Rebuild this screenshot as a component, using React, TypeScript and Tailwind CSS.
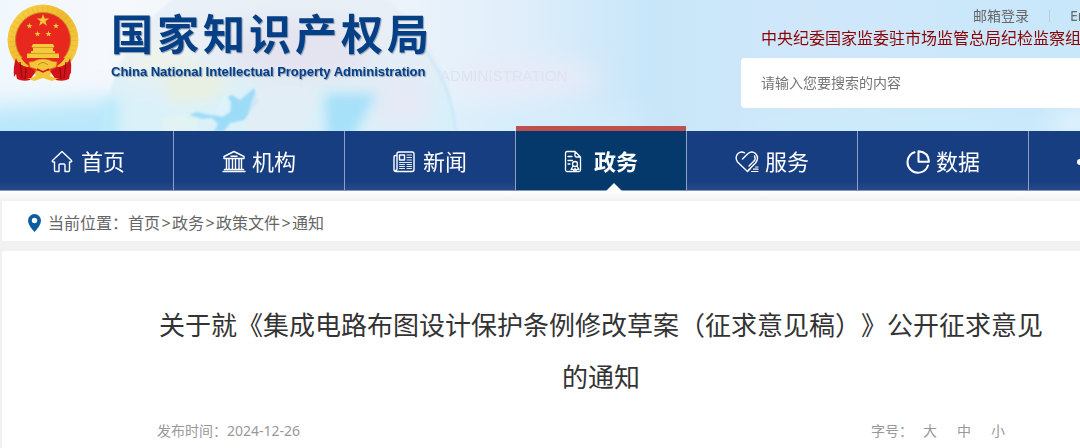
import React from "react";

const STAR = "M0 -1L0.24 -0.32L0.95 -0.31L0.38 0.12L0.59 0.81L0 0.4L-0.59 0.81L-0.38 0.12L-0.95 -0.31L-0.24 -0.32Z";

const Emblem = () => (
  <svg className="w-[72px] h-[78px] shrink-0" viewBox="0 0 72 78" aria-hidden="true">
    <defs>
      <linearGradient id="gold" x1="0" y1="0" x2="1" y2="1">
        <stop offset="0" stopColor="#f9d44c" />
        <stop offset="0.5" stopColor="#eeb92e" />
        <stop offset="1" stopColor="#f8d248" />
      </linearGradient>
    </defs>
    <circle cx="36" cy="36" r="35.5" fill="url(#gold)" />
    <circle cx="36" cy="36" r="31" fill="none" stroke="#c98f1c" strokeWidth="6" strokeDasharray="1 4" opacity="0.2" />
    <circle cx="36" cy="36" r="27.5" fill="#e8281f" stroke="#c8861b" strokeWidth="1" />
    <g fill="#f0c93a">
      <path d={STAR} transform="translate(36 16.500) scale(6.500)" />
      <path d={STAR} transform="translate(22.500 22) scale(3.200)" />
      <path d={STAR} transform="translate(49 22) scale(3.200)" />
      <path d={STAR} transform="translate(30.500 30) scale(3.200)" />
      <path d={STAR} transform="translate(41.500 30) scale(3.200)" />
    </g>
    <path d="M26 40h20l1.500 3h-1.500v4h2v2.500h4v5H20v-5h4V47h2v-4h-1.500z" fill="#f5c93c" />
    <path d="M25 43.500h22M23 49.500h26" stroke="#d68a20" strokeWidth="0.800" />
    <path d="M10 54h52l-5 9q-21 8-42 0z" fill="#e8281f" />
    <path d="M6 52h7q3 6 9 10l-4 3q-9-4-12-13zM66 52h-7q-3 6-9 10l4 3q9-4 12-13z" fill="#f0c035" />
    <path d="M9 54q1 7 14 10l6 3-6 9q-7 2-13-1l-1-5-2 3q-1-11 2-19z" fill="#d2141a" />
    <path d="M63 54q-1 7-14 10l-6 3 6 9q7 2 13-1l1-5 1-1q1-8-1-15z" fill="#d2141a" />
    <path d="M13 58l2 16M19 64l-1 11M59 58l-2 16M53 64l1 11" stroke="#8f0b12" strokeWidth="1.200" />
    <path d="M22 58q5 0 8-2 6-2 12 0 3 2 8 2l-1 5-6 2-7 4-7-4-6-2z" fill="#f3c63a" stroke="#c98b1d" strokeWidth="0.600" />
    <path d="M31 61q5-5 10 0" fill="none" stroke="#c98b1d" strokeWidth="1" />
    <path d="M20 74q8 1 11-6 5-3 10 0 3 7 11 6l-7 3-9-3-9 3z" fill="#f3c63a" />
    <path d="M30 65l6 3 6-3" fill="none" stroke="#d2141a" strokeWidth="1.500" />
  </svg>
);

const Backdrop = () => (
  <svg className="absolute inset-0 w-full h-full" viewBox="0 0 1080 131" preserveAspectRatio="none" aria-hidden="true">
    <defs>
      <linearGradient id="sky" x1="0" x2="1" y1="0" y2="0">
        <stop offset="0" stopColor="#f1f8fd" />
        <stop offset="0.1" stopColor="#f5f8fc" />
        <stop offset="0.35" stopColor="#eef4fb" />
        <stop offset="0.48" stopColor="#e0eefa" />
        <stop offset="0.6" stopColor="#c8e6f9" />
        <stop offset="0.75" stopColor="#d0e7fa" />
        <stop offset="1" stopColor="#c8e7fb" />
      </linearGradient>
      <filter id="soft" x="-50%" y="-100%" width="200%" height="300%">
        <feGaussianBlur stdDeviation="12" />
      </filter>
      <filter id="mid" x="-50%" y="-50%" width="200%" height="200%">
        <feGaussianBlur stdDeviation="6" />
      </filter>
      <filter id="edge" x="-20%" y="-20%" width="140%" height="140%">
        <feGaussianBlur stdDeviation="1.200" />
      </filter>
      <linearGradient id="globe" x1="0" x2="0" y1="0" y2="0.4">
        <stop offset="0" stopColor="#e9f0f8" />
        <stop offset="0.6" stopColor="#e6eef5" />
        <stop offset="1" stopColor="#d6f0f9" />
      </linearGradient>
    </defs>
    <rect width="1080" height="131" fill="url(#sky)" />
    <g filter="url(#soft)">
      <path d="M-30 108l150-10v60H-30z" fill="#b9e7fb" />
      <ellipse cx="530" cy="78" rx="70" ry="16" fill="#e9ebf8" />
      <ellipse cx="540" cy="122" rx="110" ry="12" fill="#d3edfb" />
      <ellipse cx="900" cy="128" rx="160" ry="10" fill="#caedfa" />
      <ellipse cx="1075" cy="124" rx="26" ry="12" fill="#e6f6fd" />
    </g>
    <circle cx="280" cy="140" r="177" fill="url(#globe)" opacity="0.800" filter="url(#edge)" />
    <g filter="url(#soft)">
      <ellipse cx="160" cy="58" rx="34" ry="18" fill="#eff4ea" />
      <ellipse cx="300" cy="50" rx="75" ry="30" fill="#e4e3ef" />
      <ellipse cx="400" cy="100" rx="30" ry="30" fill="#e6e9f6" />
    </g>
    <g filter="url(#mid)">
      <path d="M325 94h52l-26 44h-24z" fill="#a6e0f9" />
      <path d="M105 100h12l-2 40h-14z" fill="#b5e9fa" />
      <path d="M160 70l40-6 30 20-20 16-40 4z" fill="#e7f0e2" />
    </g>
    <g filter="url(#edge)">
      <path d="M254 88l-8 7-6 5-8-5-6 2 2 12-8 7-10-1-14-3-10 5 12 2 14-1 6 6-4 7h10l6-8 14-3 6-8 8-10z" fill="#92d8f7" opacity="0.850" />
      <path d="M222 97l5-2 4 8-1 9-8 5-6-4z" fill="#dcf3fa" />
      <path d="M254 95q14-14 34-10 26 0 26 14-2 18-12 32h-56q2-22 8-36z" fill="#e4edf4" opacity="0.700" />
      <path d="M164 117l22-3 14 4-4 13h-34z" fill="#e2f4f1" opacity="0.800" />
      <path d="M456 131Q450 80 420 44" fill="none" stroke="#cbe6fa" strokeWidth="2" />
    </g>
    <text x="440" y="81" fontSize="15" fontFamily="Liberation Sans, sans-serif" fill="#dde4f0">
      ADMINISTRATION
    </text>
  </svg>
);

const iconProps = {
  fill: "none",
  stroke: "currentColor",
  strokeWidth: 1.4,
  strokeLinejoin: "round" as const,
  strokeLinecap: "round" as const,
  "aria-hidden": true,
};

const HomeIcon = () => (
  <svg {...iconProps} className="w-[22px] h-6" viewBox="0 0 22 24">
    <path d="M11 1.500L1.500 10.500q-.8 1.500 1 1.500H3.500v8.500q0 1 1 1h3.500V15q0-1 1-1h4q1 0 1 1v6.500H17.500q1 0 1-1V12h1q1.800 0 1-1.500z" />
  </svg>
);

const BankIcon = () => (
  <svg {...iconProps} className="w-6 h-6" viewBox="0 0 24 24">
    <path d="M12 1.500L2 6.500v2h20v-2zM4.500 9v10M7 9v10M10.500 9v10M13.500 9v10M17 9v10M19.500 9v10M2.500 19.500h19M1 21.500h22" />
    <path d="M9 6.200h6" />
  </svg>
);

const NewsIcon = () => (
  <svg {...iconProps} className="w-[22px] h-6" viewBox="0 0 22 24">
    <path d="M4 4q0-2 2-2h13q2 0 2 2v15.500q0 2-2 2H3q-2 0-2-2V7q0-1.500 1.500-1.500H4zM4 5.500V19q0 1.500-1.500 1.500" />
    <path d="M6.500 5h5v5h-5z" />
    <path d="M14 5h4.500M14 7.500h4.500M14 10h4.500M6.500 12.500h12M6.500 14.500h5M6.500 16.500h5M6.500 18.500h5M14 14.500h4.500M14 16.500h4.500M14 18.500h4.500" strokeWidth="0.900" />
  </svg>
);

const PolicyIcon = () => (
  <svg {...iconProps} className="w-[18px] h-6" viewBox="0 0 18 24">
    <path d="M11 1.500H3q-1.500 0-1.500 1.500v17q0 1.500 1.500 1.500h12q1.500 0 1.500-1.500V7zM11 1.500V5.500q0 1.500 1.500 1.500h4" strokeWidth="1.300" />
    <path d="M4 6.500h4M4 10.500h4.500M4 14h2" strokeWidth="1.300" />
    <circle cx="11" cy="14" r="2.500" strokeWidth="1.300" />
    <path d="M9 16l-2 3.500 2-.3 1 1.600 1-2.500 1 2.500 1-1.600 2 .3-2-3.500" strokeWidth="1.200" />
  </svg>
);

const ServiceIcon = () => (
  <svg {...iconProps} className="w-6 h-6" viewBox="0 0 24 24">
    <path d="M12.500 21.500L2.500 12Q-.5 7 3 3.500 6 .8 9.500 2.800M7.500 9l5.500-5.500Q17 .5 20.500 3.500 24.500 8 20.500 13L13.500 20M12.500 21.500l3-3" />
    <path d="M19.500 6q1.500 3-.5 5l-5 5" />
    <path d="M20.500 17H23M18.500 19.200H23M16.500 21.500H23" strokeWidth="1.200" />
  </svg>
);

const DataIcon = () => (
  <svg {...iconProps} strokeWidth={2} className="w-6 h-6" viewBox="0 0 24 24">
    <path d="M8.500 2.300A10.500 10.500 0 1 0 22 15.500" />
    <path d="M12.500 1.200V11.800H23Q22.500 2 12.500 1.200z" />
  </svg>
);

const InteractIcon = () => (
  <svg {...iconProps} strokeWidth={2} className="w-6 h-6" viewBox="0 0 24 24">
    <circle cx="3" cy="12" r="2" fill="currentColor" />
    <path d="M5 12h13" />
  </svg>
);

const navItems = [
  { label: "首页", icon: <HomeIcon /> },
  { label: "机构", icon: <BankIcon /> },
  { label: "新闻", icon: <NewsIcon /> },
  { label: "政务", icon: <PolicyIcon />, active: true },
  { label: "服务", icon: <ServiceIcon /> },
  { label: "数据", icon: <DataIcon /> },
];

const crumbs = ["首页", "政务", "政策文件", "通知"];

const App = () => {
  return (
    <div className="min-h-screen overflow-hidden bg-[#f1f1f1] font-['Noto_Sans','Noto_Sans_CJK_SC',sans-serif] text-[#666]">
      <header className="relative h-[131px]">
        <Backdrop />
        <div className="relative flex h-full justify-between overflow-hidden">
          <div className="flex items-start gap-8 pl-[7px] pt-1">
            <Emblem />
            <div className="text-[#053f86] [text-shadow:1px_1px_1px_#8c9cb4]">
              <h1 className="flex gap-1 pt-1 text-[42px] font-bold leading-[52px]">
                {"国家知识产权局".split("").map((c) => (
                  <span key={c}>{c}</span>
                ))}
              </h1>
              <p className="whitespace-nowrap font-['Liberation_Sans',sans-serif] text-[13px] font-bold leading-6">
                China National Intellectual Property Administration
              </p>
            </div>
          </div>
          <div className="w-[339px] shrink-0 whitespace-nowrap">
            <div className="flex h-7 items-center pl-[232px] pt-1 text-sm">
              <a href="#mail">邮箱登录</a>
              <span className="mx-5 h-3 w-px shrink-0 bg-[#c4c8cc]"></span>
              <a href="#en">English</a>
            </div>
            <a href="#inspection" className="block h-[30px] pl-5 text-base leading-5 text-[#8b0000]">
              中央纪委国家监委驻市场监管总局纪检监察组
            </a>
            <input
              type="text"
              aria-label="搜索"
              placeholder="请输入您要搜索的内容"
              className="block h-[50px] w-full rounded-l-sm bg-white px-5 pb-[2px] text-sm placeholder:text-[#757575]"
            />
          </div>
        </div>
      </header>

      <nav className="relative flex h-[60px] border-b border-[#8295bb] bg-linear-to-b from-[#173e80] from-85% to-[#28498a] pl-[3px] text-white">
        {navItems.map((item) => (
          <a
            key={item.label}
            href="#nav"
            className={
              item.active
                ? "relative flex w-[171px] shrink-0 items-center border-r border-[#8fa0c2] bg-[#05386b] pl-12 pt-[2px] text-[22px] font-bold"
                : "flex w-[171px] shrink-0 items-center border-r border-[#8fa0c2] pl-12 pt-[2px] text-[22px]"
            }
          >
            {item.active && <span className="absolute inset-x-0 -top-[5px] h-[5px] bg-[#be5150]"></span>}
            <span className="w-[30px]">{item.icon}</span>
            {item.label}
            {item.active && (
              <svg className="absolute -bottom-px left-[90px] h-2 w-4" viewBox="0 0 16 8" aria-hidden="true">
                <path d="M0 8L8 0l8 8z" fill="#fff" />
              </svg>
            )}
          </a>
        ))}
        <a href="#nav" aria-label="互动" className="flex shrink-0 items-center pl-12 pt-[2px]">
          <InteractIcon />
        </a>
      </nav>

      <div className="h-[10px] bg-linear-to-b from-white to-[#f1f1f1]"></div>
      <div className="ml-[2px] flex h-10 items-center bg-white pl-[26px] pt-1 text-base">
        <svg className="mr-[7px] h-[18px] w-[13px]" viewBox="0 0 13 18" aria-hidden="true">
          <path d="M6.500 0A6.500 6.500 0 0 0 0 6.500Q0 11 6.500 18 13 11 13 6.500A6.500 6.500 0 0 0 6.500 0zm0 3.800a2.700 2.700 0 1 1 0 5.400 2.700 2.700 0 0 1 0-5.400z" fill="#0b5ca0" />
        </svg>
        <span>当前位置：</span>
        {crumbs.map((crumb, i) => (
          <React.Fragment key={crumb}>
            {i > 0 && <span className="w-3 text-center">&gt;</span>}
            <a href="#crumb">{crumb}</a>
          </React.Fragment>
        ))}
      </div>

      <main className="ml-[2px] mt-[10px] bg-white pb-4 pl-[155px] pr-[35px] pt-12">
        <h2 className="text-center text-[26px] leading-[52px] text-[#333] [text-spacing-trim:space-all]">
          关于就《集成电路布图设计保护条例修改草案（征求意见稿）》公开征求意见的通知
        </h2>
        <div className="mt-3 flex justify-between text-sm leading-8 text-[#999] [text-spacing-trim:space-all]">
          <p>发布时间：2024-12-26</p>
          <div className="flex pr-10">
            <span className="mr-[10px]">字号：</span>
            <div className="flex gap-5">
              <button>大</button>
              <button>中</button>
              <button>小</button>
            </div>
          </div>
        </div>
      </main>
    </div>
  );
};

export default App;
